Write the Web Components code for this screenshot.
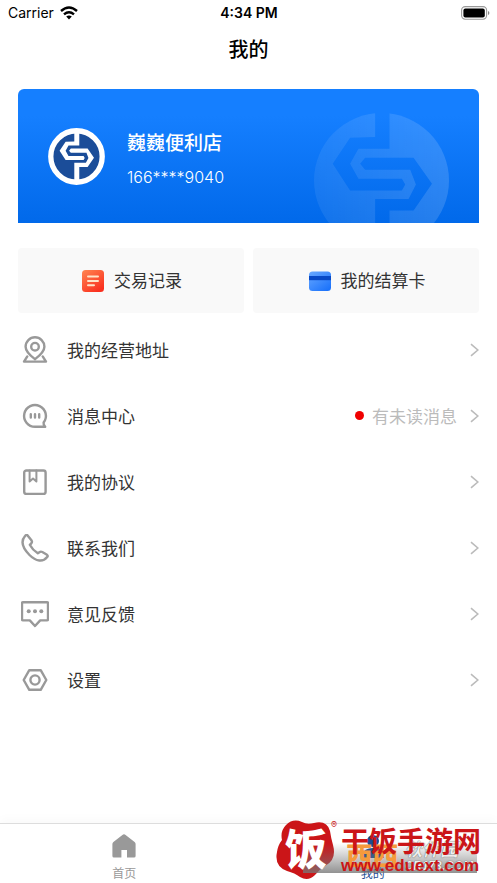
<!DOCTYPE html>
<html lang="zh-CN">
<head>
<meta charset="utf-8">
<meta name="viewport" content="width=device-width, initial-scale=1">
<title>我的</title>
<style>
  body {
    margin: 0;
    background: #fff;
    color: #333;
    font-family: Inter, "Noto Sans CJK SC", sans-serif;
  }
</style>
</head>
<body>
<profile-page>
  <status-bar slot="top" carrier="Carrier" time="4:34 PM"></status-bar>
  <store-card phone="166****9040">巍巍便利店</store-card>
  <tile-group>
    <quick-tile icon="record">交易记录</quick-tile>
    <quick-tile icon="card">我的结算卡</quick-tile>
  </tile-group>
  <nav>
    <menu-row icon="pin">我的经营地址</menu-row>
    <menu-row icon="chat" note="有未读消息">消息中心</menu-row>
    <menu-row icon="book">我的协议</menu-row>
    <menu-row icon="phone">联系我们</menu-row>
    <menu-row icon="feedback">意见反馈</menu-row>
    <menu-row icon="settings">设置</menu-row>
  </nav>
  <tab-item slot="tabs" icon="home">首页</tab-item>
  <tab-item slot="tabs" icon="user" active>我的</tab-item>
  <site-badge slot="badge"></site-badge>
</profile-page>

<script>
const ICONS = {
  wifi: `<svg width="18" height="14" viewBox="0 0 18 14" fill="none" stroke="#000" stroke-width="2.4"><path d="M1 5Q9-2 17 5M4 8.3Q9 4 14 8.3"/><path d="M9 13.5 6.2 10.6Q9 8.3 11.8 10.6Z" fill="#000" stroke="none"/></svg>`,
  battery: `<svg width="29" height="14" viewBox="0 0 29 14"><rect x=".6" y=".6" width="25" height="12.6" rx="3.6" fill="none" stroke="#999" stroke-width="1.1"/><rect x="2.4" y="2.4" width="21.4" height="9" rx="2" fill="#000"/><path d="M27 5v4q1.4-.6 1.4-2T27 5" fill="#888"/></svg>`,
  record: `<svg width="22" height="22" viewBox="0 0 22 22"><defs><linearGradient id="g" x2=".7" y2="1"><stop stop-color="#ff8651"/><stop offset="1" stop-color="#fa301f"/></linearGradient></defs><rect width="22" height="22" rx="3.5" fill="url(#g)"/><path d="M6 6.5h10M6 11h10M6 15.3h6" stroke="#ffe3c8" stroke-width="2" stroke-linecap="round"/></svg>`,
  card: `<svg width="22" height="22" viewBox="0 0 22 22"><defs><linearGradient id="g" x2=".8" y2="1"><stop stop-color="#69a9ff"/><stop offset="1" stop-color="#1c73fb"/></linearGradient></defs><rect y="1.5" width="22" height="19.5" rx="3.5" fill="url(#g)"/><path d="M0 6h22v4.2H0z" fill="#0749c6"/></svg>`,
  pin: `<svg width="28" height="28" viewBox="0 0 28 28"><path d="M14 23.2C10 20 4.6 16 4.6 10.7a9.4 9.4 0 0 1 18.8 0C23.4 16 18 20 14 23.2Z"/><circle cx="14" cy="10.7" r="3.8"/><path d="M6.3 20.4 3 25.6h22l-3.3-5.2"/></svg>`,
  chat: `<svg width="28" height="28" viewBox="0 0 28 28"><path d="M24.2 24.8H14A10.9 10.9 0 1 1 22.600 20.6Q22.2 22.8 24.2 24.8Z"/><path d="M9.800 12.200v3.400M14 12.200v3.400M18.200 12.200v3.400"/></svg>`,
  book: `<svg width="28" height="28" viewBox="0 0 28 28"><rect x="3.200" y="2.500" width="21.400" height="23.400" rx="2.200"/><path d="M8.600 2.500v11l3.400-3 3.400 3v-11" stroke-width="2"/></svg>`,
  phone: `<svg width="28" height="28" viewBox="0 0 28 28"><path d="M6.600 1.400 10.600 6.600Q11.500 8 10.200 9.500L8.800 10.800Q11.500 16 16.800 19.300L18.400 18.200Q19.800 17.200 21.300 18L26 20.800Q27.200 21.800 26.200 23C22 28.500 15 27.500 8.500 21 1.500 14-.8 7.500 4.200 1.800Q5.400.3 6.600 1.400Z"/></svg>`,
  feedback: `<svg width="28" height="28" viewBox="0 0 28 28"><path d="M2 2.200h24q1 0 1 1v16.200q0 1-1 1h-6.800L14 26l-5.200-5.600H2q-1 0-1-1V3.200q0-1 1-1Z"/><g fill="#999" stroke="none"><circle cx="7.700" cy="11.200" r="2"/><circle cx="14" cy="11.200" r="2"/><circle cx="20.300" cy="11.200" r="2"/></g></svg>`,
  settings: `<svg width="28" height="28" viewBox="0 0 28 28"><path d="M8.300 4.200h11.400L25.300 14l-5.600 9.800H8.300L2.700 14Z"/><circle cx="14" cy="14" r="4.600"/></svg>`,
  arrow: `<svg width="10" height="14" viewBox="0 0 10 14"><path d="M2 1.200 8.800 7 2 12.800" fill="none" stroke="#bbb" stroke-width="1.600"/></svg>`,
  home: `<svg width="24" height="24" viewBox="0 0 24 24" fill="#999"><path d="M10.400.9q1.600-1.200 3.200 0L22.600 8q1 .8 1 2v12q0 1.600-1.600 1.600h-7V16H9.400v7.600H2Q.4 23.600.4 22V10q0-1.200 1-2Z"/></svg>`,
  user: `<svg width="24" height="24" viewBox="0 0 24 24" fill="#1b4c94"><circle cx="12" cy="7" r="6"/><path d="M1 24q0-10 11-10t11 10Z"/></svg>`
};

// the two interlocking arms of the brand mark, on a 404 unit circle
const ARMS = `<path d="M183-4V72L108 74 56 152 108 232H263L273 214 263 197H133L108 152 133 107H226V-4Z"/><path d="M153 134H298L353 212 298 292H226V408H183V257H283L305 214 288 170H153L138 152Z"/>`;

class BaseElement extends HTMLElement {
  constructor() {
    super();
    this.attachShadow({ mode: "open" });
  }
  connectedCallback() {
    this.shadowRoot.innerHTML = this.render();
  }
}

class ProfilePage extends BaseElement {
  render() {
    return /*html*/ `
      <style>
        :host { display: flex; flex-direction: column; min-height: 100vh; position: relative; }
        h1 { margin: 0; font-size: 20px; line-height: 50px; font-weight: 500; text-align: center; color: #000; }
        main { flex: 1; padding: 14px 18px 0; }
        footer { display: flex; height: 59px; border-top: 1px solid #ddd; box-shadow: 0 -4px 10px #fafafa; }
      </style>
      <header><slot name="top"></slot><h1>我的</h1></header>
      <main><slot></slot></main>
      <footer><slot name="tabs"></slot></footer>
      <slot name="badge"></slot>`;
  }
}

class StatusBar extends BaseElement {
  render() {
    return /*html*/ `
      <style>
        :host { display: grid; grid-template-columns: 1fr auto 1fr; align-items: center; height: 25px; padding: 0 7px 0 8px; font-size: 14px; color: #000; }
        .left { display: flex; align-items: center; gap: 6px; }
        .time { font-weight: 600; }
        .right { justify-self: end; }
        svg { display: block; }
      </style>
      <span class="left">${this.getAttribute("carrier")}${ICONS.wifi}</span>
      <span class="time">${this.getAttribute("time")}</span>
      <span class="right">${ICONS.battery}</span>`;
  }
}

class StoreCard extends BaseElement {
  render() {
    return /*html*/ `
      <style>
        :host { display: flex; align-items: center; gap: 22px; height: 134px; padding: 0 30px; box-sizing: border-box; position: relative; overflow: hidden; border-radius: 6px 6px 0 0; background: linear-gradient(#157fff 20%, #0169ea); color: #fff; }
        .info { padding-top: 7px; }
        .name { font-size: 19px; line-height: 28px; font-weight: 500; }
        .phone { margin-top: 7px; font-size: 16px; line-height: 24px; font-weight: 300; }
        .back { position: absolute; top: 24px; right: 30px; }
      </style>
      <svg class="back" width="135" height="135" viewBox="0 0 404 404">
        <defs>
          <mask id="m"><path d="M0 0h404v404H0z" fill="#fff"/><g fill="#000">${ARMS}</g></mask>
          <linearGradient id="g" x1="0" x2="1"><stop stop-color="#fff" stop-opacity=".07"/><stop offset="1" stop-color="#fff" stop-opacity=".15"/></linearGradient>
        </defs>
        <circle cx="202" cy="202" r="202" fill="url(#g)" mask="url(#m)"/>
      </svg>
      <svg width="57" height="57" viewBox="-44 -44 492 492">
        <circle cx="202" cy="202" r="222" fill="#1b4d99" stroke="#fff" stroke-width="46"/>
        <g fill="#fff">${ARMS}</g>
      </svg>
      <div class="info">
        <div class="name"><slot></slot></div>
        <div class="phone">${this.getAttribute("phone")}</div>
      </div>`;
  }
}

class TileGroup extends BaseElement {
  render() {
    return /*html*/ `
      <style>
        :host { display: grid; grid-template-columns: 1fr 1fr; gap: 9px; margin: 25px 0 4px; }
      </style>
      <slot></slot>`;
  }
}

class QuickTile extends BaseElement {
  render() {
    return /*html*/ `
      <style>
        :host { display: block; }
        button { display: flex; align-items: center; justify-content: center; gap: 10px; width: 100%; height: 65px; padding: 0 0 0 2px; border: 0; border-radius: 4px; background: #f9f9f9; color: #333; font: inherit; font-size: 17px; }
        .label { padding-bottom: 2px; }
      </style>
      <button type="button">${ICONS[this.getAttribute("icon")]}<span class="label"><slot></slot></span></button>`;
  }
}

class MenuRow extends BaseElement {
  render() {
    const note = this.getAttribute("note");
    return /*html*/ `
      <style>
        :host { display: block; }
        button { display: flex; align-items: center; width: 100%; height: 66px; padding: 0 0 0 3px; border: 0; background: none; color: #333; font: inherit; font-size: 17px; text-align: left; }
        .icon { width: 28px; height: 28px; margin-right: 18px; fill: none; stroke: #999; stroke-width: 2.4; stroke-linejoin: round; stroke-linecap: round; }
        .label, .note { padding-bottom: 2px; }
        .label { flex: 1; }
        .note { display: flex; align-items: center; gap: 8px; margin-right: 12px; color: #bbb; }
        .note::before { content: ""; width: 9px; height: 9px; border-radius: 50%; background: #f00000; }
      </style>
      <button type="button">
        <span class="icon">${ICONS[this.getAttribute("icon")]}</span>
        <span class="label"><slot></slot></span>
        ${note ? `<span class="note">${note}</span>` : ""}
        ${ICONS.arrow}
      </button>`;
  }
}

class TabItem extends BaseElement {
  render() {
    return /*html*/ `
      <style>
        :host { flex: 1; }
        a { display: flex; flex-direction: column; align-items: center; gap: 7px; padding-top: 10px; color: #999; font-size: 12px; line-height: 18px; text-decoration: none; }
        :host([active]) a { color: #1b4c94; }
        svg { display: block; }
      </style>
      <a href="#">${ICONS[this.getAttribute("icon")]}<span><slot></slot></span></a>`;
  }
}

// download site stamp that floats over the tab bar
class SiteBadge extends BaseElement {
  render() {
    return /*html*/ `
      <style>
        :host { position: absolute; right: 16px; bottom: 2px; display: flex; align-items: end; gap: 4px; pointer-events: none; color: #cb1518; font-weight: 700; }
        .seal { display: grid; place-items: center; width: 62px; height: 62px; }
        .seal > * { grid-area: 1 / 1; }
        .seal span { color: #fff; font-size: 42px; line-height: 60px; font-weight: 900; z-index: 1; }
        .reg { place-self: start end; font-size: 9px; line-height: 12px; font-weight: 400; }
        .text { position: relative; display: grid; padding-bottom: 6px; }
        .site { font-size: 28px; line-height: 30px; }
        .url { font: bold 17px/18px "Liberation Sans", Arial, sans-serif; }
        .site, .url { position: relative; white-space: nowrap; }
        .under { position: absolute; right: 4px; bottom: 8px; display: flex; justify-content: flex-end; align-items: end; gap: 6px; width: 174px; height: 30px; background: linear-gradient(#fff0, #777c); }
        .under b { color: #f59a3c; font-size: 26px; line-height: 32px; }
        .under i { display: grid; padding-right: 4px; color: #eee; font: italic bold 12px/14px "Liberation Sans", "Noto Sans CJK SC", sans-serif; text-shadow: 0 0 1px #333; }
        .under i span:first-child { font-size: 18px; line-height: 18px; }
      </style>
      <div class="seal">
        <svg width="60" height="60" viewBox="0 0 60 60"><path d="M10 5Q17-2 26 2q5 3 12 1 13-3 16 8 1 7 3 14 4 15-8 21-5 3-10 9-7 7-15 2-5-4-13-6Q-2 46 1 32q1-7 5-12Q4 11 10 5Z" fill="#cb1518"/></svg>
        <span>饭</span>
        <small class="reg">®</small>
      </div>
      <div class="text">
        <div class="under"><b>西西</b><i><span>软件园</span><span>CR173.COM</span></i></div>
        <span class="site">干饭手游网</span>
        <span class="url">www.eduext.com</span>
      </div>`;
  }
}

customElements.define("status-bar", StatusBar);
customElements.define("store-card", StoreCard);
customElements.define("tile-group", TileGroup);
customElements.define("quick-tile", QuickTile);
customElements.define("menu-row", MenuRow);
customElements.define("tab-item", TabItem);
customElements.define("site-badge", SiteBadge);
customElements.define("profile-page", ProfilePage);
</script>
</body>
</html>
